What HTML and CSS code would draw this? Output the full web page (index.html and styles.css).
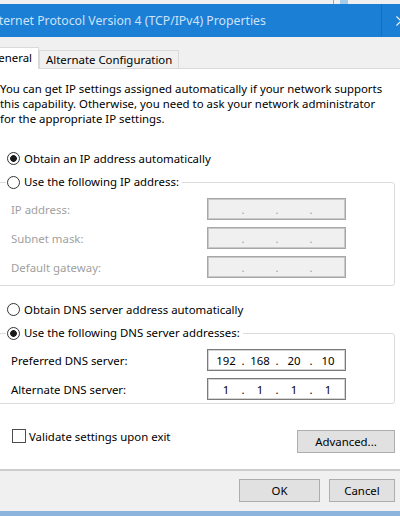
FILE: index.html
```html
<!DOCTYPE html>
<html lang="en">
<head>
<meta charset="utf-8">
<title>Internet Protocol Version 4 (TCP/IPv4) Properties</title>
<link rel="stylesheet" href="styles.css">
</head>
<body>
<div class="topstrip"><span class="ts-line"></span><span class="ts-blue"></span></div>
<div class="titlebar">
  <span class="title">Internet Protocol Version 4 (TCP/IPv4) Properties</span>
  <span class="tb-sep"></span>
  <svg class="tb-close" viewBox="0 0 10 10" width="10" height="10"><path d="M0.5 0.5 L9.5 9.5 M9.5 0.5 L0.5 9.5" stroke="#ffffff" stroke-width="1.1" fill="none"/></svg>
</div>
<div class="tabs">
  <div class="tab tab-active">General</div>
  <div class="tab">Alternate Configuration</div>
</div>
<div class="panel">
  <p class="intro">You can get IP settings assigned automatically if your network supports<br>this capability. Otherwise, you need to ask your network administrator<br>for the appropriate IP settings.</p>
  <div class="opt opt-ip"><span class="radio radio-on"></span>Obtain an IP address automatically</div>
  <fieldset class="group">
    <legend class="legend"><span class="legend-in"><span class="radio"></span>Use the following IP address:</span></legend>
    <div class="rows">
      <div class="row"><span class="lbl-off">IP address:</span><span class="ip ip-off"><span class="oct"></span><span class="dot">.</span><span class="oct"></span><span class="dot">.</span><span class="oct"></span><span class="dot">.</span><span class="oct"></span></span></div>
      <div class="row"><span class="lbl-off">Subnet mask:</span><span class="ip ip-off"><span class="oct"></span><span class="dot">.</span><span class="oct"></span><span class="dot">.</span><span class="oct"></span><span class="dot">.</span><span class="oct"></span></span></div>
      <div class="row"><span class="lbl-off">Default gateway:</span><span class="ip ip-off"><span class="oct"></span><span class="dot">.</span><span class="oct"></span><span class="dot">.</span><span class="oct"></span><span class="dot">.</span><span class="oct"></span></span></div>
    </div>
  </fieldset>
  <div class="opt opt-dns"><span class="radio"></span>Obtain DNS server address automatically</div>
  <fieldset class="group group-dns">
    <legend class="legend"><span class="legend-in"><span class="radio radio-on"></span>Use the following DNS server addresses:</span></legend>
    <div class="rows">
      <div class="row"><span>Preferred DNS server:</span><span class="ip"><span class="oct">192</span><span class="dot">.</span><span class="oct">168</span><span class="dot">.</span><span class="oct">20</span><span class="dot">.</span><span class="oct">10</span></span></div>
      <div class="row"><span>Alternate DNS server:</span><span class="ip"><span class="oct">1</span><span class="dot">.</span><span class="oct">1</span><span class="dot">.</span><span class="oct">1</span><span class="dot">.</span><span class="oct">1</span></span></div>
    </div>
  </fieldset>
  <div class="bottom">
    <div class="check"><span class="box"></span>Validate settings upon exit</div>
    <button class="btn btn-adv">Advanced...</button>
  </div>
</div>
<div class="footer">
  <button class="btn btn-ok">OK</button>
  <button class="btn btn-cancel">Cancel</button>
</div>
<div class="bottomstrip"></div>
</body>
</html>
```
FILE: styles.css
```css
* { box-sizing: border-box; }
html, body { margin: 0; padding: 0; }
body {
  width: 400px;
  height: 516px;
  overflow: hidden;
  background: #f0f0f0;
  font-family: "Noto Sans", "Open Sans", sans-serif;
  font-size: 11.4px;
  line-height: 15px;
  color: #000;
}
.topstrip { height: 4px; display: flex; background: #f0f0f0; }
.ts-line { width: 1px; background: #a8a8a8; margin-left: 333px; }
.ts-blue { width: 8px; background: #a9cbea; margin-left: 6px; }

.titlebar { height: 33px; background: #1b7fd6; display: flex; align-items: center; }
.title { flex: 1; margin-left: -13px; color: #cde2f6; font-size: 12.25px; white-space: nowrap; }
.tb-sep { align-self: stretch; width: 1px; background: #196dbd; }
.tb-close { flex: none; width: 10px; height: 10px; margin-left: 14px; margin-right: -6px; }

.tabs {
  height: 32px;
  border-bottom: 1px solid #d9d9d9;
  display: flex;
  align-items: flex-end;
}
.tab {
  border: 1px solid #d9d9d9;
  border-bottom: none;
  padding: 0 6px;
  height: 18px;
  line-height: 17px;
  white-space: nowrap;
  background: #f0f0f0;
}
.tab-active {
  height: 22px;
  line-height: 19px;
  background: #fff;
  margin-bottom: -1px;
  margin-left: -17px;
}

.panel { background: #fff; padding: 12px 0 16px; border-bottom: 2px solid #cdcdcd; }
.intro { margin: 0; white-space: nowrap; }
.opt { display: flex; align-items: center; height: 16px; white-space: nowrap; }
.opt-ip { margin-top: 24px; }
.opt-dns { margin-top: 15px; }
.radio {
  flex: none;
  width: 13px;
  height: 13px;
  border: 1px solid #333;
  border-radius: 50%;
  background: #fff;
  margin: 0 4px 0 7px;
}
.radio-on { background: radial-gradient(circle, #1a1a1a 0 3px, #fff 3.7px); }

.group {
  margin: 8px 5px 0 -6px;
  border: 1px solid #dcdcdc;
  border-radius: 3px;
  padding: 8px 0 7px 11px;
  min-width: 0;
}
.group-dns { padding-bottom: 3px; }
.legend { padding: 0 3px 0 0; line-height: 16px; height: 16px; }
.legend-in { display: inline-flex; align-items: center; height: 16px; vertical-align: top; white-space: nowrap; }
.legend .radio { margin-left: 1px; }
.rows { display: flex; flex-direction: column; gap: 7px; padding-left: 5px; }
.row { display: grid; grid-template-columns: 196px 139px; align-items: center; height: 22px; white-space: nowrap; }
.lbl-off { color: #9f9f9f; }
.ip {
  height: 22px;
  display: flex;
  align-items: center;
  padding-left: 4px;
  border: 1px solid #7a7a7a;
  box-shadow: inset 0 0 0 1px #d4d4d4;
  background: #fff;
}
.ip-off { background: #f0f0f0; border-color: #a7a7a7; box-shadow: inset 0 0 0 1px #c8c8c8; color: #a0a0a0; }
.oct { width: 28px; text-align: center; }
.dot { width: 6px; text-align: center; }

.bottom { display: flex; justify-content: space-between; align-items: flex-start; margin-top: 24px; }
.check { display: flex; align-items: center; height: 16px; margin-left: 12px; white-space: nowrap; }
.box { width: 14px; height: 14px; border: 1px solid #4d4d4d; background: #fff; margin-right: 3px; }

.btn {
  font: inherit;
  color: #000;
  background: #e1e1e1;
  border: 1px solid #adadad;
  height: 23px;
  padding: 0;
  line-height: 21px;
}
.btn-adv { width: 98px; margin: 2px 5px 0 0; }
.footer { height: 40px; display: flex; justify-content: flex-end; gap: 9px; padding: 8px 5px 0 0; }
.btn-ok { width: 81px; }
.btn-cancel { width: 66px; }
.bottomstrip { height: 5px; background: #8cb4dc; }
```
